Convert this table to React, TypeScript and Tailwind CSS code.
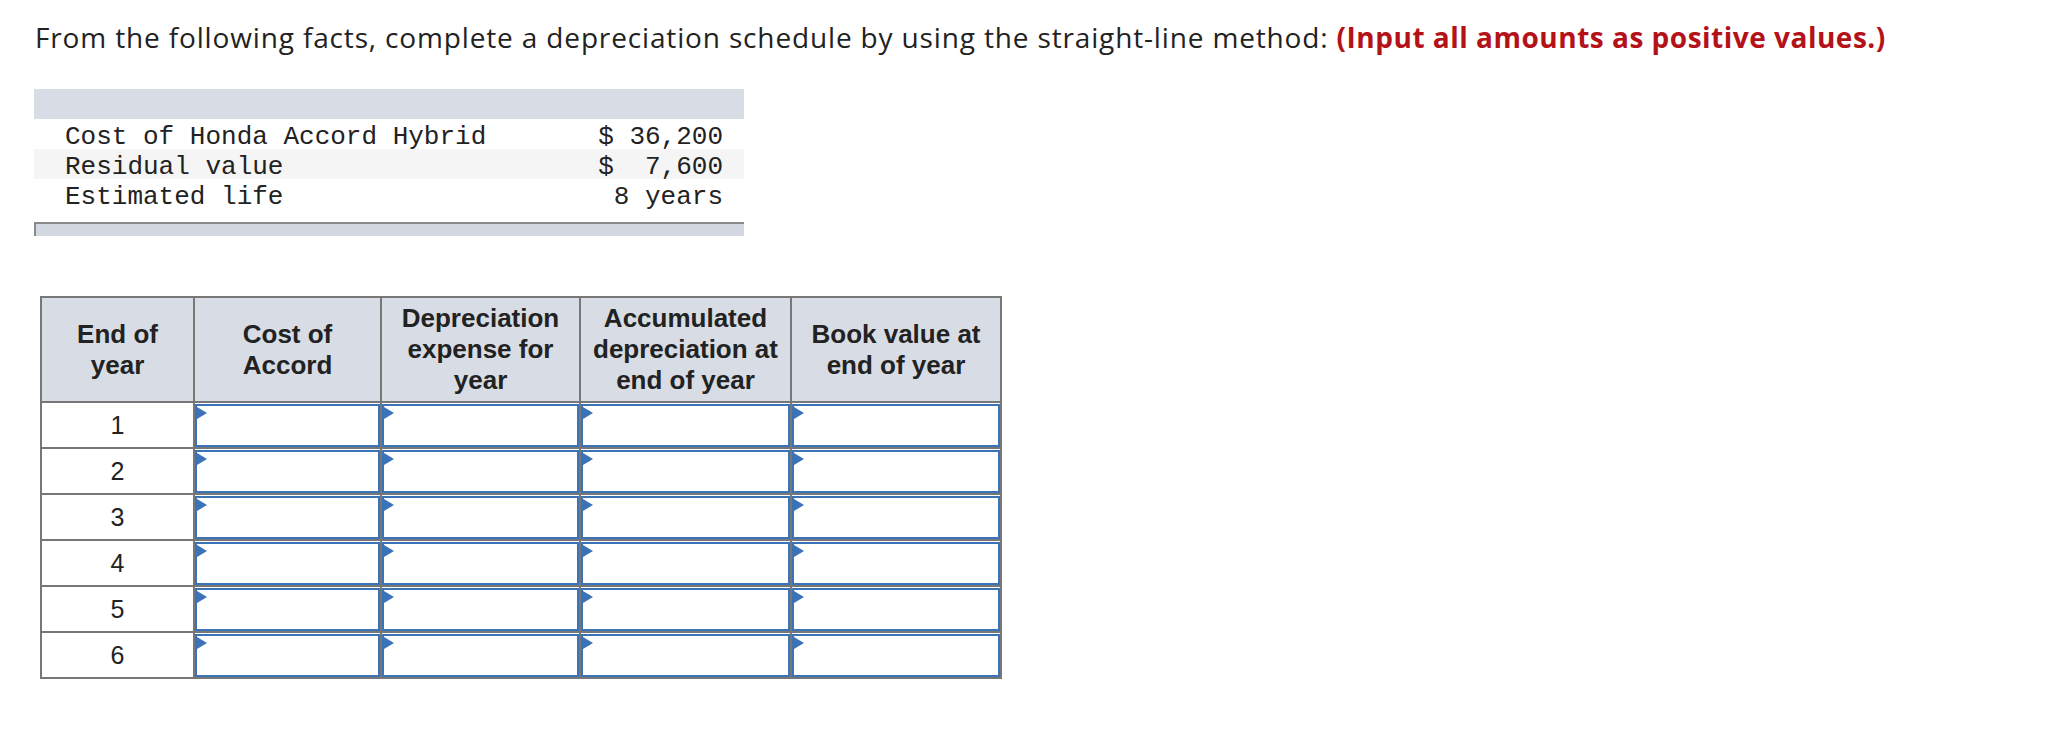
import React from 'react';

const facts = [
  { label: 'Cost of Honda Accord Hybrid', value: '$ 36,200', shade: false },
  { label: 'Residual value', value: '$  7,600', shade: true },
  { label: 'Estimated life', value: ' 8 years', shade: false },
];

const headers: string[][] = [
  ['End of', 'year'],
  ['Cost of', 'Accord'],
  ['Depreciation', 'expense for', 'year'],
  ['Accumulated', 'depreciation at', 'end of year'],
  ['Book value at', 'end of year'],
];

const colWidths = ['w-[153px]', 'w-[187px]', 'w-[199px]', 'w-[211px]', 'w-[210px]'];

const InputCell: React.FC = () => (
  <td className="border-2 border-[#777777] p-0 pt-px align-top">
    <div className="relative h-[43px] border-2 border-[#3a73b8] bg-white">
      <span className="absolute left-0 top-px h-0 w-0 border-y-[6px] border-l-[10px] border-y-transparent border-l-[#3a73b8]" />
    </div>
  </td>
);

export default function App() {
  return (
    <div className="h-[730px] w-full bg-white text-[#222222]">
      <p
        className="whitespace-nowrap pl-[35px] pt-[18px] text-[28px] leading-[38px] tracking-[0.85px]"
        style={{ fontFamily: '"Open Sans", Lato, sans-serif' }}
      >
        From the following facts, complete a depreciation schedule by using the straight-line method:{' '}
        <span className="font-bold tracking-[0.5px] text-[#b31219]">(Input all amounts as positive values.)</span>
      </p>

      <div className="ml-[34px] mt-[33px] w-[710px]" style={{ fontFamily: '"Liberation Mono", monospace' }}>
        <div className="h-[30px] bg-[#d8dce4]" />
        {facts.map(f => (
          <div
            key={f.label}
            className={`flex h-[30px] items-center justify-between pl-[31px] pr-[21px] pt-[5px] text-[26px] leading-[30px] ${
              f.shade ? 'bg-[#f5f5f5]' : 'bg-white'
            }`}
          >
            <span>{f.label}</span>
            <span className="whitespace-pre">{f.value}</span>
          </div>
        ))}
        <div className="mt-[13px] h-[14px] border-l-2 border-t-2 border-[#8a8a8a] bg-[#d3d8e0]" />
      </div>

      <table
        className="ml-[40px] mt-[60px] border-collapse"
        style={{ fontFamily: '"Liberation Sans", Arial, sans-serif' }}
      >
        <thead>
          <tr>
            {headers.map((h, i) => (
              <th
                key={i}
                className={`${colWidths[i]} h-[105px] border-2 border-[#777777] bg-[#d8dce4] px-1 text-center text-[26px] font-bold leading-[31px]`}
              >
                {h.map((line, j) => (
                  <div key={j}>{line}</div>
                ))}
              </th>
            ))}
          </tr>
        </thead>
        <tbody>
          {[1, 2, 3, 4, 5, 6].map(n => (
            <tr key={n} className="h-[46px]">
              <td className="border-2 border-[#777777] text-center text-[25px] leading-[30px]">{n}</td>
              <InputCell />
              <InputCell />
              <InputCell />
              <InputCell />
            </tr>
          ))}
        </tbody>
      </table>
    </div>
  );
}
